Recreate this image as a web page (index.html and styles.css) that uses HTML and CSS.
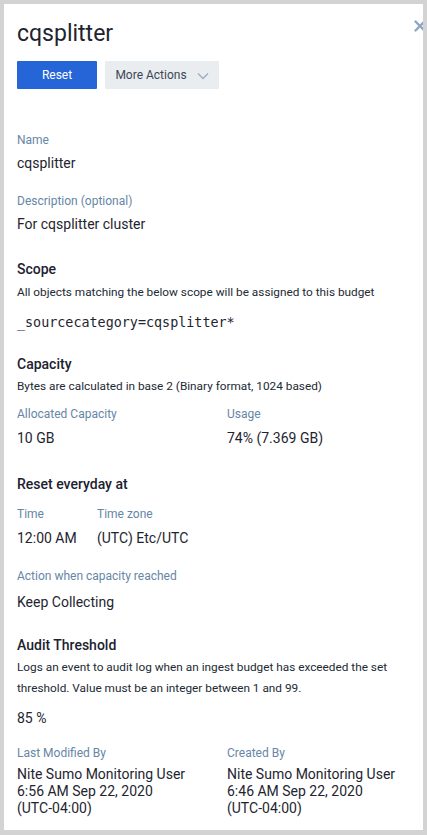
FILE: index.html
```html
<!DOCTYPE html>
<html lang="en">
<head>
<meta charset="utf-8">
<title>cqsplitter</title>
<link rel="stylesheet" href="styles.css">
</head>
<body>
<div class="panel">
  <button class="close" aria-label="Close">
    <svg width="12" height="12" viewBox="0 0 12 12"><path d="M1.5 1.5L10.5 10.5M10.5 1.5L1.5 10.5" stroke="#8ea7c2" stroke-width="2.4" stroke-linecap="round"/></svg>
  </button>
  <h1 class="title">cqsplitter</h1>
  <div class="actions">
    <button class="btn btn-primary">Reset</button>
    <button class="btn btn-secondary">More Actions
      <svg class="chev" width="12" height="8" viewBox="0 0 12 8"><path d="M1 1.5L6 6.5L11 1.5" fill="none" stroke="#9cadc0" stroke-width="1.4"/></svg>
    </button>
  </div>

  <div class="label first">Name</div>
  <div class="value v4">cqsplitter</div>

  <div class="label g19">Description (optional)</div>
  <div class="value v4">For cqsplitter cluster</div>

  <h2 class="heading g24">Scope</h2>
  <p class="desc d2">All objects matching the below scope will be assigned to this budget</p>
  <div class="mono">_sourcecategory=cqsplitter*</div>

  <h2 class="heading g20">Capacity</h2>
  <p class="desc d1">Bytes are calculated in base 2 (Binary format, 1024 based)</p>
  <div class="cols c9">
    <div class="col wide">
      <div class="label">Allocated Capacity</div>
      <div class="value v5">10 GB</div>
    </div>
    <div class="col">
      <div class="label">Usage</div>
      <div class="value v5">74% (7.369 GB)</div>
    </div>
  </div>

  <h2 class="heading g25">Reset everyday at</h2>
  <div class="cols c10">
    <div class="col narrow">
      <div class="label">Time</div>
      <div class="value v5">12:00 AM</div>
    </div>
    <div class="col">
      <div class="label">Time zone</div>
      <div class="value v5">(UTC) Etc/UTC</div>
    </div>
  </div>

  <div class="label g19">Action when capacity reached</div>
  <div class="value v7">Keep Collecting</div>

  <h2 class="heading g22">Audit Threshold</h2>
  <p class="desc multi d1">Logs an event to audit log when an ingest budget has exceeded the set threshold. Value must be an integer between 1 and 99.</p>
  <div class="value v9">85 %</div>

  <div class="cols c16">
    <div class="col wide">
      <div class="label">Last Modified By</div>
      <div class="value stack">Nite Sumo Monitoring User<br>6:56 AM Sep 22, 2020<br>(UTC-04:00)</div>
    </div>
    <div class="col">
      <div class="label">Created By</div>
      <div class="value stack">Nite Sumo Monitoring User<br>6:46 AM Sep 22, 2020<br>(UTC-04:00)</div>
    </div>
  </div>
</div>
</body>
</html>
```

FILE: styles.css
```css
html, body {
  margin: 0;
  padding: 0;
}
body {
  background: #d3d3d3;
  font-family: Roboto, "Liberation Sans", Arial, sans-serif;
  color: #1e2530;
  padding: 4px 4px 5px 4px;
  height: 835px;
  box-sizing: border-box;
}
.panel {
  position: relative;
  background: #ffffff;
  height: 826px;
  box-sizing: border-box;
  padding: 15px 0 0 13px;
  overflow: hidden;
}
.close {
  position: absolute;
  top: 16px;
  right: -3px;
  border: 0;
  background: none;
  padding: 0;
  width: 12px;
  height: 12px;
  display: flex;
}
.title {
  margin: 0;
  font-size: 23px;
  line-height: 30px;
  font-weight: 400;
  color: #1d2430;
}
.actions {
  display: flex;
  gap: 8px;
  margin-top: 12px;
}
.btn {
  height: 28px;
  border: 0;
  border-radius: 1px;
  font-family: Roboto, "Liberation Sans", Arial, sans-serif;
  font-size: 12px;
  padding: 0;
  display: flex;
  align-items: center;
  justify-content: center;
}
.btn-primary {
  width: 80px;
  background: #2565d8;
  color: #ffffff;
}
.btn-secondary {
  width: 114px;
  background: #eaedf0;
  color: #3b4757;
  gap: 10px;
}
.chev {
  margin-top: 1px;
}
.label {
  font-size: 12px;
  line-height: 18px;
  color: #6686a6;
}
.label.first {
  margin-top: 42px;
}
.value {
  font-size: 14px;
  line-height: 20px;
  color: #1e2530;
}
.v4 { margin-top: 4px; }
.v5 { margin-top: 5px; }
.v7 { margin-top: 7px; }
.v9 { margin-top: 9px; }
.g19 { margin-top: 19px; }
.g20 { margin-top: 20px; }
.g22 { margin-top: 22px; }
.g24 { margin-top: 24px; }
.g25 { margin-top: 25px; }
.heading {
  margin-bottom: 0;
  font-size: 14px;
  line-height: 22px;
  font-weight: 500;
  color: #1b2230;
}
.desc {
  margin: 0;
  font-size: 11.8px;
  line-height: 20px;
  color: #222a35;
  padding-right: 6px;
}
.desc.multi {
  line-height: 21px;
}
.d1 { margin-top: 1px; }
.d2 { margin-top: 2px; }
.mono {
  margin-top: 11px;
  font-family: "DejaVu Sans Mono", monospace;
  font-size: 13.4px;
  line-height: 20px;
  color: #1e2530;
}
.cols {
  display: flex;
}
.c9 { margin-top: 9px; }
.c10 { margin-top: 10px; }
.c16 { margin-top: 16px; }
.col.wide { width: 210px; }
.col.narrow { width: 80px; }
.value.stack {
  margin-top: 4px;
  line-height: 17px;
}
```
